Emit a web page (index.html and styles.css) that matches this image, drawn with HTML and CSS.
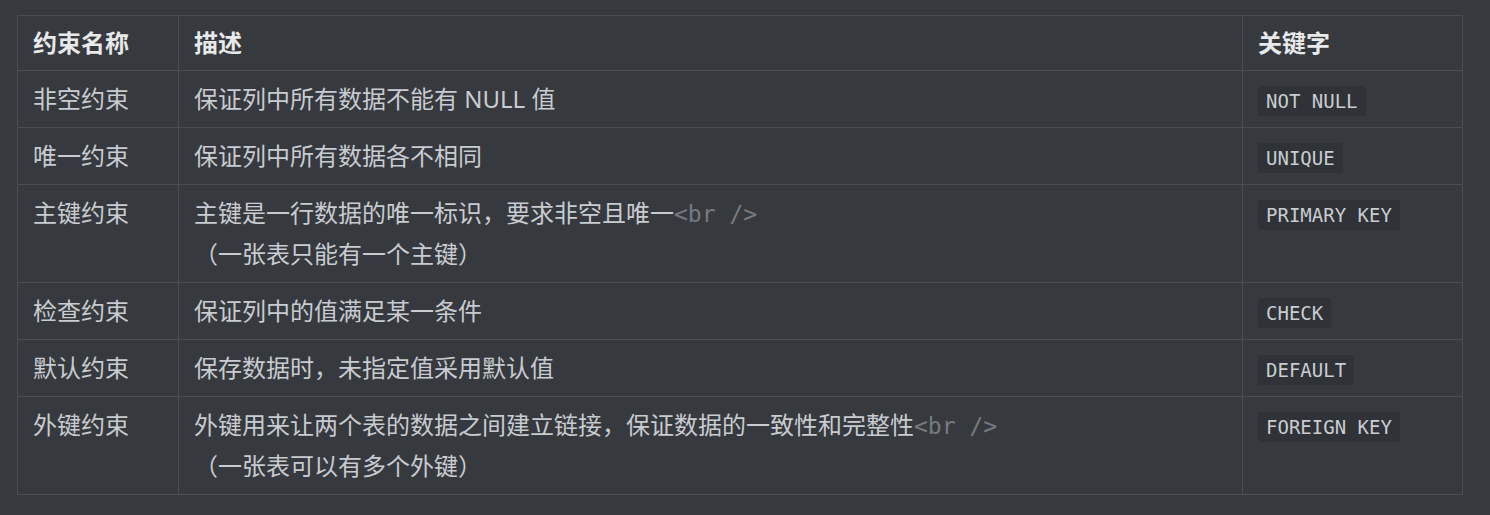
FILE: index.html
```html
<!DOCTYPE html>
<html>

<head>
    <title>约束</title>
    <link rel="stylesheet" href="styles.css">
</head>

<body>
    <table class="constraints">
        <colgroup>
            <col class="col-name">
            <col class="col-desc">
            <col class="col-key">
        </colgroup>
        <tr>
            <th>约束名称</th>
            <th>描述</th>
            <th>关键字</th>
        </tr>
        <tr>
            <td>非空约束</td>
            <td>保证列中所有数据不能有 NULL 值</td>
            <td><code>NOT NULL</code></td>
        </tr>
        <tr>
            <td>唯一约束</td>
            <td>保证列中所有数据各不相同</td>
            <td><code>UNIQUE</code></td>
        </tr>
        <tr>
            <td>主键约束</td>
            <td>主键是一行数据的唯一标识，要求非空且唯一<span class="tag">&lt;br /&gt;</span><br>（一张表只能有一个主键）</td>
            <td><code>PRIMARY KEY</code></td>
        </tr>
        <tr>
            <td>检查约束</td>
            <td>保证列中的值满足某一条件</td>
            <td><code>CHECK</code></td>
        </tr>
        <tr>
            <td>默认约束</td>
            <td>保存数据时，未指定值采用默认值</td>
            <td><code>DEFAULT</code></td>
        </tr>
        <tr>
            <td>外键约束</td>
            <td>外键用来让两个表的数据之间建立链接，保证数据的一致性和完整性<span class="tag">&lt;br /&gt;</span><br>（一张表可以有多个外键）</td>
            <td><code>FOREIGN KEY</code></td>
        </tr>
    </table>
</body>

</html>
```

FILE: styles.css
```css
body {
    margin: 0;
    padding: 15px 0 0 17px;
    background-color: #363a3f;
    font-family: 'Noto Sans', 'Noto Sans CJK SC', sans-serif;
    color: #c8cbcf;
}

.constraints {
    border-collapse: collapse;
    table-layout: fixed;
    width: 1445px;
    font-size: 24px;
    line-height: 41px;
}

.col-name {
    width: 161px;
}

.col-desc {
    width: 1064px;
}

.col-key {
    width: 220px;
}

th, td {
    border: 1px solid #4a4e53;
    text-align: left;
    vertical-align: top;
}

th {
    padding: 6px 15px 7px;
    color: #e8e9ea;
    font-weight: bold;
}

td {
    padding: 7px 15px 8px;
}

.tag {
    font-family: 'DejaVu Sans Mono', monospace;
    font-size: 23px;
    line-height: 1;
    color: #767a7f;
}

code {
    font-family: 'DejaVu Sans Mono', monospace;
    font-size: 19px;
    line-height: 22px;
    padding: 4px 8px;
    background-color: #2f3236;
    color: #c9ccd0;
    border-radius: 3px;
}
```
